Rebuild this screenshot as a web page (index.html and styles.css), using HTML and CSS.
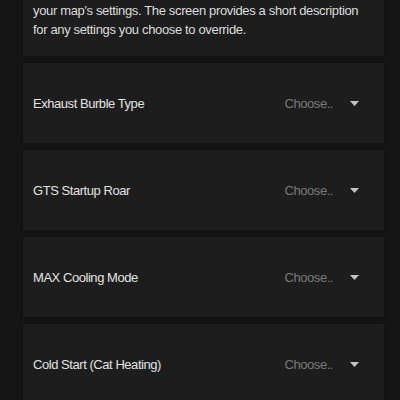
FILE: index.html
```html
<!DOCTYPE html>
<html>
<head>
<meta charset="utf-8">
<link rel="stylesheet" href="styles.css">
</head>
<body>
<div class="list">
  <div class="card intro">
    <p>your map's settings. The screen provides a short description for any settings you choose to override.</p>
  </div>
  <div class="card row">
    <span class="label">Exhaust Burble Type</span>
    <span class="select"><span class="placeholder">Choose..</span><svg class="caret" width="9" height="5" viewBox="0 0 9 5"><polygon points="0,0 9,0 4.5,5" fill="#c4c4c4"/></svg></span>
  </div>
  <div class="card row">
    <span class="label">GTS Startup Roar</span>
    <span class="select"><span class="placeholder">Choose..</span><svg class="caret" width="9" height="5" viewBox="0 0 9 5"><polygon points="0,0 9,0 4.5,5" fill="#c4c4c4"/></svg></span>
  </div>
  <div class="card row">
    <span class="label">MAX Cooling Mode</span>
    <span class="select"><span class="placeholder">Choose..</span><svg class="caret" width="9" height="5" viewBox="0 0 9 5"><polygon points="0,0 9,0 4.5,5" fill="#c4c4c4"/></svg></span>
  </div>
  <div class="card row">
    <span class="label">Cold Start (Cat Heating)</span>
    <span class="select"><span class="placeholder">Choose..</span><svg class="caret" width="9" height="5" viewBox="0 0 9 5"><polygon points="0,0 9,0 4.5,5" fill="#c4c4c4"/></svg></span>
  </div>
</div>
</body>
</html>
```
FILE: styles.css
```css
html, body {
  margin: 0;
  padding: 0;
  background: #151515;
  height: 400px;
  overflow: hidden;
}
body {
  font-family: "Liberation Sans", Arial, sans-serif;
  font-size: 13px;
  letter-spacing: -0.45px;
  color: #e2e2e2;
}
.list {
  margin-left: 23px;
  width: 361px;
  display: flex;
  flex-direction: column;
  gap: 7px;
}
.card {
  background: #1d1d1d;
  box-shadow: 0 0 3px rgba(0,0,0,0.35);
}
.intro {
  padding: 1px 20px 17px 10px;
}
.intro p {
  margin: 0;
  line-height: 19px;
  letter-spacing: -0.35px;
  color: #dcdcdc;
}
.row {
  height: 80px;
  display: flex;
  align-items: center;
  justify-content: space-between;
  padding: 0 25px 0 10px;
}
.label {
  color: #e2e2e2;
}
.select {
  display: flex;
  align-items: center;
  gap: 17px;
}
.placeholder {
  color: #7a7a7a;
}
.caret {
  display: block;
}
```
